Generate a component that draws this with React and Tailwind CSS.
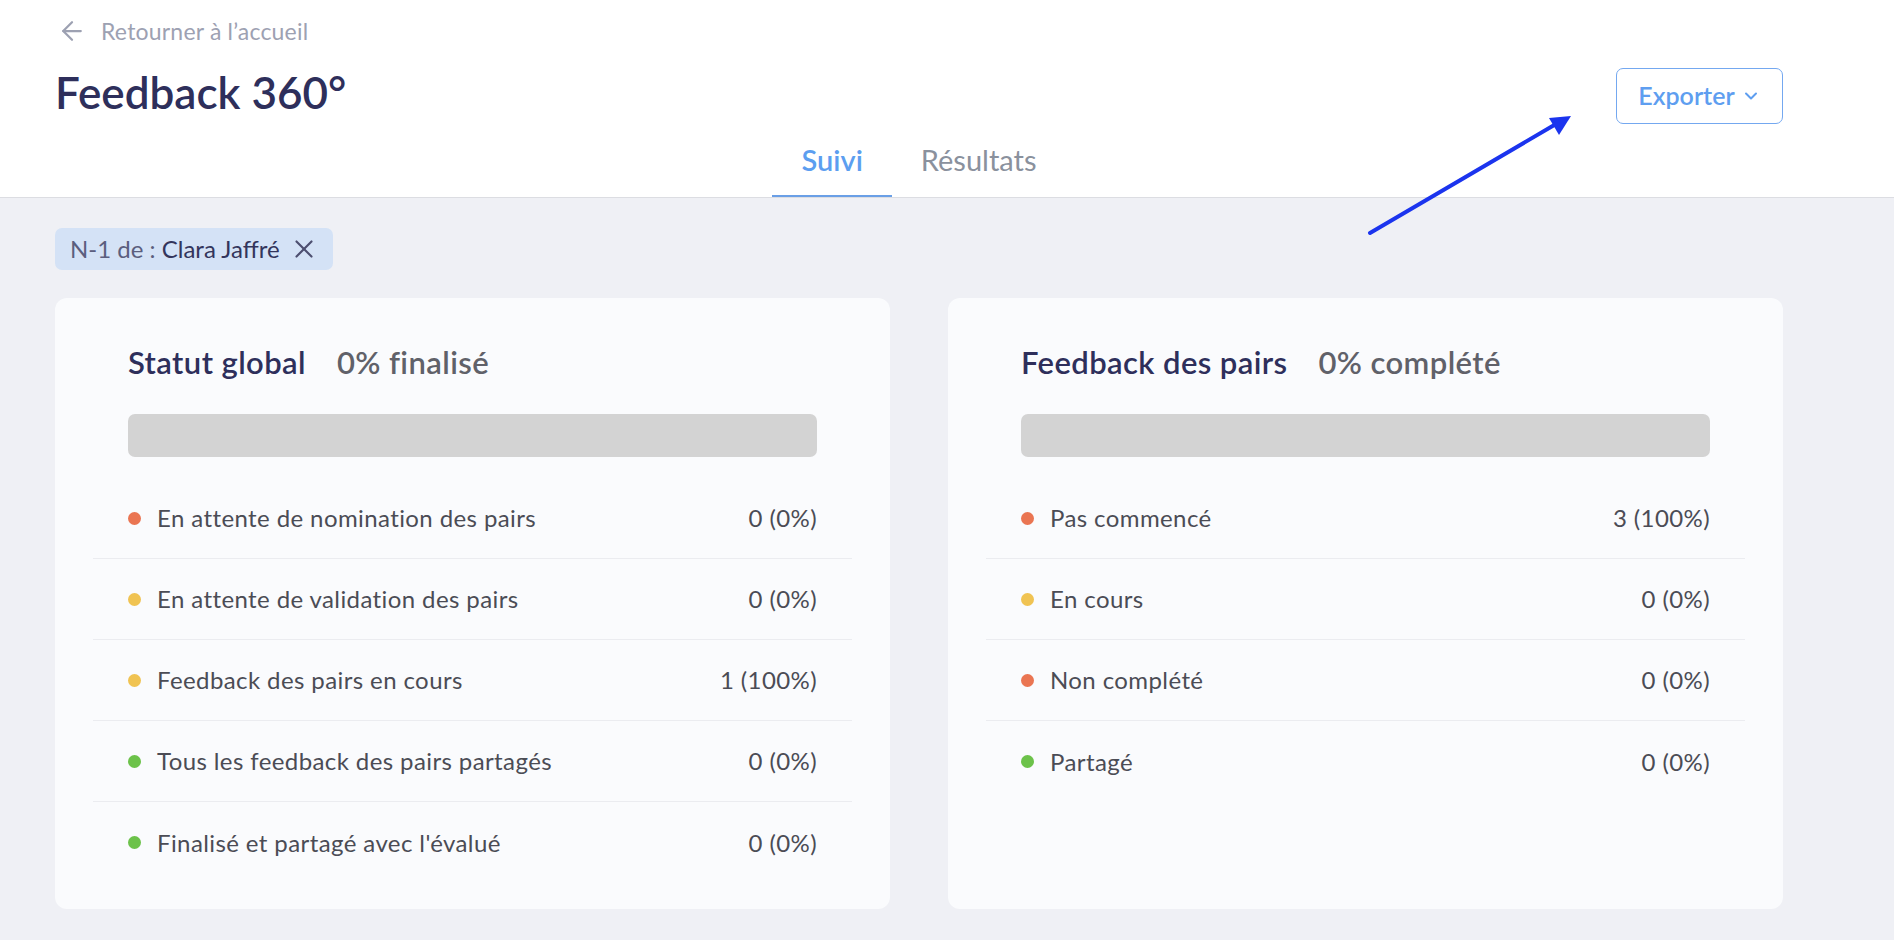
import { ArrowLeft, ChevronDown, X } from "lucide-react";

const globalRows = [
  { label: "En attente de nomination des pairs", value: "0 (0%)", color: "bg-[#ea7552]" },
  { label: "En attente de validation des pairs", value: "0 (0%)", color: "bg-[#f0c352]" },
  { label: "Feedback des pairs en cours", value: "1 (100%)", color: "bg-[#f0c352]" },
  { label: "Tous les feedback des pairs partagés", value: "0 (0%)", color: "bg-[#6cc24a]" },
  { label: "Finalisé et partagé avec l'évalué", value: "0 (0%)", color: "bg-[#6cc24a]" },
];

const peerRows = [
  { label: "Pas commencé", value: "3 (100%)", color: "bg-[#ea7552]" },
  { label: "En cours", value: "0 (0%)", color: "bg-[#f0c352]" },
  { label: "Non complété", value: "0 (0%)", color: "bg-[#ea7552]" },
  { label: "Partagé", value: "0 (0%)", color: "bg-[#6cc24a]" },
];

function StatusCard({ title, subtitle, rows }) {
  return (
    <div className="bg-[#fafbfd] rounded-[12px] px-[38px] pt-[47px] pb-[26px]">
      <div className="px-[35px]">
        <div className="flex items-baseline gap-[31px] text-[31px] leading-[34px] tracking-[0.4px] font-semibold">
          <span className="text-[#2e2f5b]">{title}</span>
          <span className="text-[#606169]">{subtitle}</span>
        </div>
        <div className="mt-[35px] h-[43px] rounded-[7px] bg-[#d3d3d3]" />
      </div>

      <ul className="mt-[21px]">
        {rows.map((row, i) => (
          <li
            key={row.label}
            className={
              "h-[81px] px-[35px] flex items-center justify-between text-[24px] tracking-[0.4px] text-[#4b4c55] " +
              (i < rows.length - 1 ? "border-b border-[#ebecf0]" : "")
            }
          >
            <div className="flex items-center gap-[16px]">
              <span className={"w-[13px] h-[13px] rounded-full " + row.color} />
              <span>{row.label}</span>
            </div>
            <span>{row.value}</span>
          </li>
        ))}
      </ul>
    </div>
  );
}

export default function App() {
  return (
    <div className="relative min-h-screen bg-[#eff0f5] font-['Lato',sans-serif]">
      <header className="bg-white border-b border-[#dcdde2]">
        <div className="pl-[55px] pr-[111px]">
          <a href="#" className="pt-[16px] flex items-center gap-[14px] text-[23px] leading-[24px] tracking-[0.2px] text-[#9da1b2]">
            <ArrowLeft size={30} strokeWidth={1.8} className="ml-[2px]" />
            <span>Retourner à l’accueil</span>
          </a>

          <div className="mt-[18px] flex items-start justify-between">
            <h1 className="mt-[3px] text-[44px] leading-[50px] font-semibold text-[#2e2f5b]">
              Feedback 360°
            </h1>
            <button className="mt-[4px] h-[56px] w-[167px] rounded-[7px] border border-[#74a8f0] flex items-center justify-center gap-[6px] text-[25px] font-semibold text-[#5e9ef0]">
              Exporter
              <ChevronDown size={20} strokeWidth={2.4} />
            </button>
          </div>

          <nav className="mt-[19px] flex justify-center">
            <button className="px-[29px] pb-[18px] border-b-2 border-[#6a9fe6] text-[29px] leading-[34px] font-semibold text-[#5c9ef0]">
              Suivi
            </button>
            <button className="px-[29px] pb-[18px] border-b-2 border-transparent text-[29px] leading-[34px] text-[#8a919d]">
              Résultats
            </button>
          </nav>
        </div>
      </header>

      <main className="pl-[55px] pr-[111px] pt-[30px] pb-[32px]">
        <div className="inline-flex items-center gap-[9px] h-[42px] pl-[15px] pr-[14px] rounded-[7px] bg-[#d4e2f6] text-[24px]">
          <span>
            <span className="text-[#5b5e7e]">N-1 de : </span>
            <span className="text-[#33355c]">Clara Jaffré</span>
          </span>
          <X size={30} strokeWidth={1.7} className="text-[#4d4f70]" />
        </div>

        <div className="mt-[28px] grid grid-cols-2 gap-[58px]">
          <StatusCard title="Statut global" subtitle="0% finalisé" rows={globalRows} />
          <StatusCard title="Feedback des pairs" subtitle="0% complété" rows={peerRows} />
        </div>
      </main>

      <svg className="absolute top-0 left-0 pointer-events-none" width="1894" height="940">
        <line x1="1370" y1="233" x2="1556" y2="124" stroke="#1b34ee" strokeWidth="4" strokeLinecap="round" />
        <polygon points="1571,116 1549,118 1559,135" fill="#1b34ee" />
      </svg>
    </div>
  );
}
